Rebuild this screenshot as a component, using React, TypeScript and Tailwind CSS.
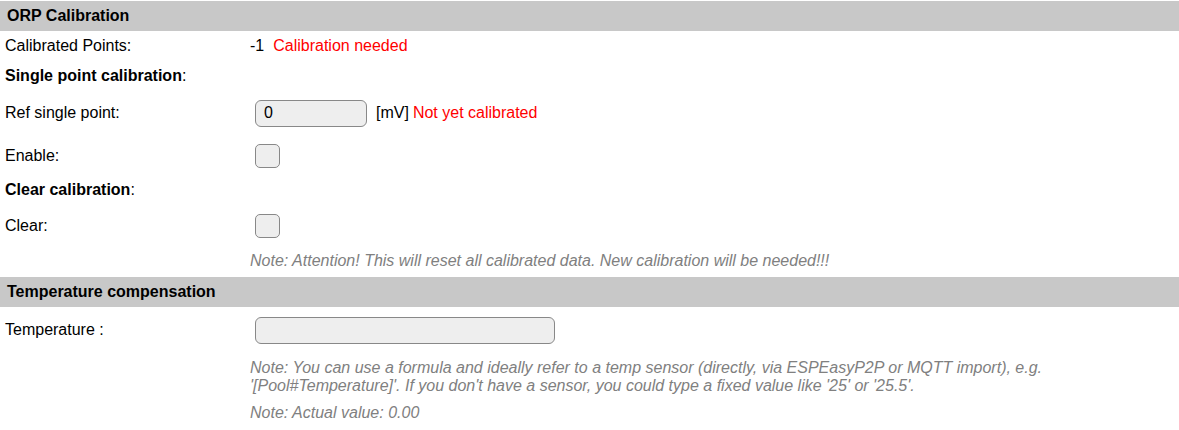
import React from 'react';

function Header({ title }: { title: string }) {
  return (
    <div className="flex h-[30px] items-center bg-[#c8c8c8] pl-[7px] font-bold">
      {title}
    </div>
  );
}

function Row({ label, h, children }: { label: React.ReactNode; h: string; children?: React.ReactNode }) {
  return (
    <div className={`flex items-center ${h}`}>
      <div className="w-[250px] shrink-0 pl-[5px]">{label}</div>
      <div className="flex flex-1 items-center">{children}</div>
    </div>
  );
}

function Checkbox() {
  return (
    <div className="ml-[5px] h-[24px] w-[25px] rounded-[5px] border border-[#888] bg-[#eeeeee]" />
  );
}

function Note({ children }: { children: React.ReactNode }) {
  return <div className="italic text-[#808080]">{children}</div>;
}

export default function App() {
  return (
    <div className="min-h-screen bg-white pt-px text-[16px] leading-[18px] text-black" style={{ fontFamily: '"Liberation Sans", Arial, sans-serif' }}>
      <Header title="ORP Calibration" />

      <Row label="Calibrated Points:" h="h-[29px]">
        <span>-1</span>
        <span className="ml-[9px] text-[#ff0000]">Calibration needed</span>
      </Row>

      <div className="flex h-[31px] items-center pl-[5px]">
        <span className="font-bold">Single point calibration</span>:
      </div>

      <Row label="Ref single point:" h="h-[44px]">
        <div className="ml-[5px] flex h-[27px] w-[112px] items-center rounded-[6px] border border-[#888] bg-[#eeeeee] pl-[8px]">
          0
        </div>
        <span className="ml-[9px]">[mV]</span>
        <span className="ml-[4px] text-[#ff0000]">Not yet calibrated</span>
      </Row>

      <Row label="Enable:" h="h-[42px]">
        <Checkbox />
      </Row>

      <div className="flex h-[26px] items-center pl-[5px]">
        <span className="font-bold">Clear calibration</span>:
      </div>

      <Row label="Clear:" h="h-[46px]">
        <Checkbox />
      </Row>

      <Row label="" h="h-[24px]">
        <Note>Note: Attention! This will reset all calibrated data. New calibration will be needed!!!</Note>
      </Row>

      <div className="mt-[4px]">
        <Header title="Temperature compensation" />
      </div>

      <Row label="Temperature :" h="h-[46px]">
        <div className="ml-[5px] h-[27px] w-[300px] rounded-[6px] border border-[#888] bg-[#eeeeee]" />
      </Row>

      <div className="flex pt-[6px]">
        <div className="w-[250px] shrink-0" />
        <div className="flex-1 pr-[6px]">
          <Note>
            Note: You can use a formula and ideally refer to a temp sensor (directly, via ESPEasyP2P or MQTT import), e.g.
            '[Pool#Temperature]'. If you don't have a sensor, you could type a fixed value like '25' or '25.5'.
          </Note>
          <div className="mt-[9px]">
            <Note>Note: Actual value: 0.00</Note>
          </div>
        </div>
      </div>
    </div>
  );
}
